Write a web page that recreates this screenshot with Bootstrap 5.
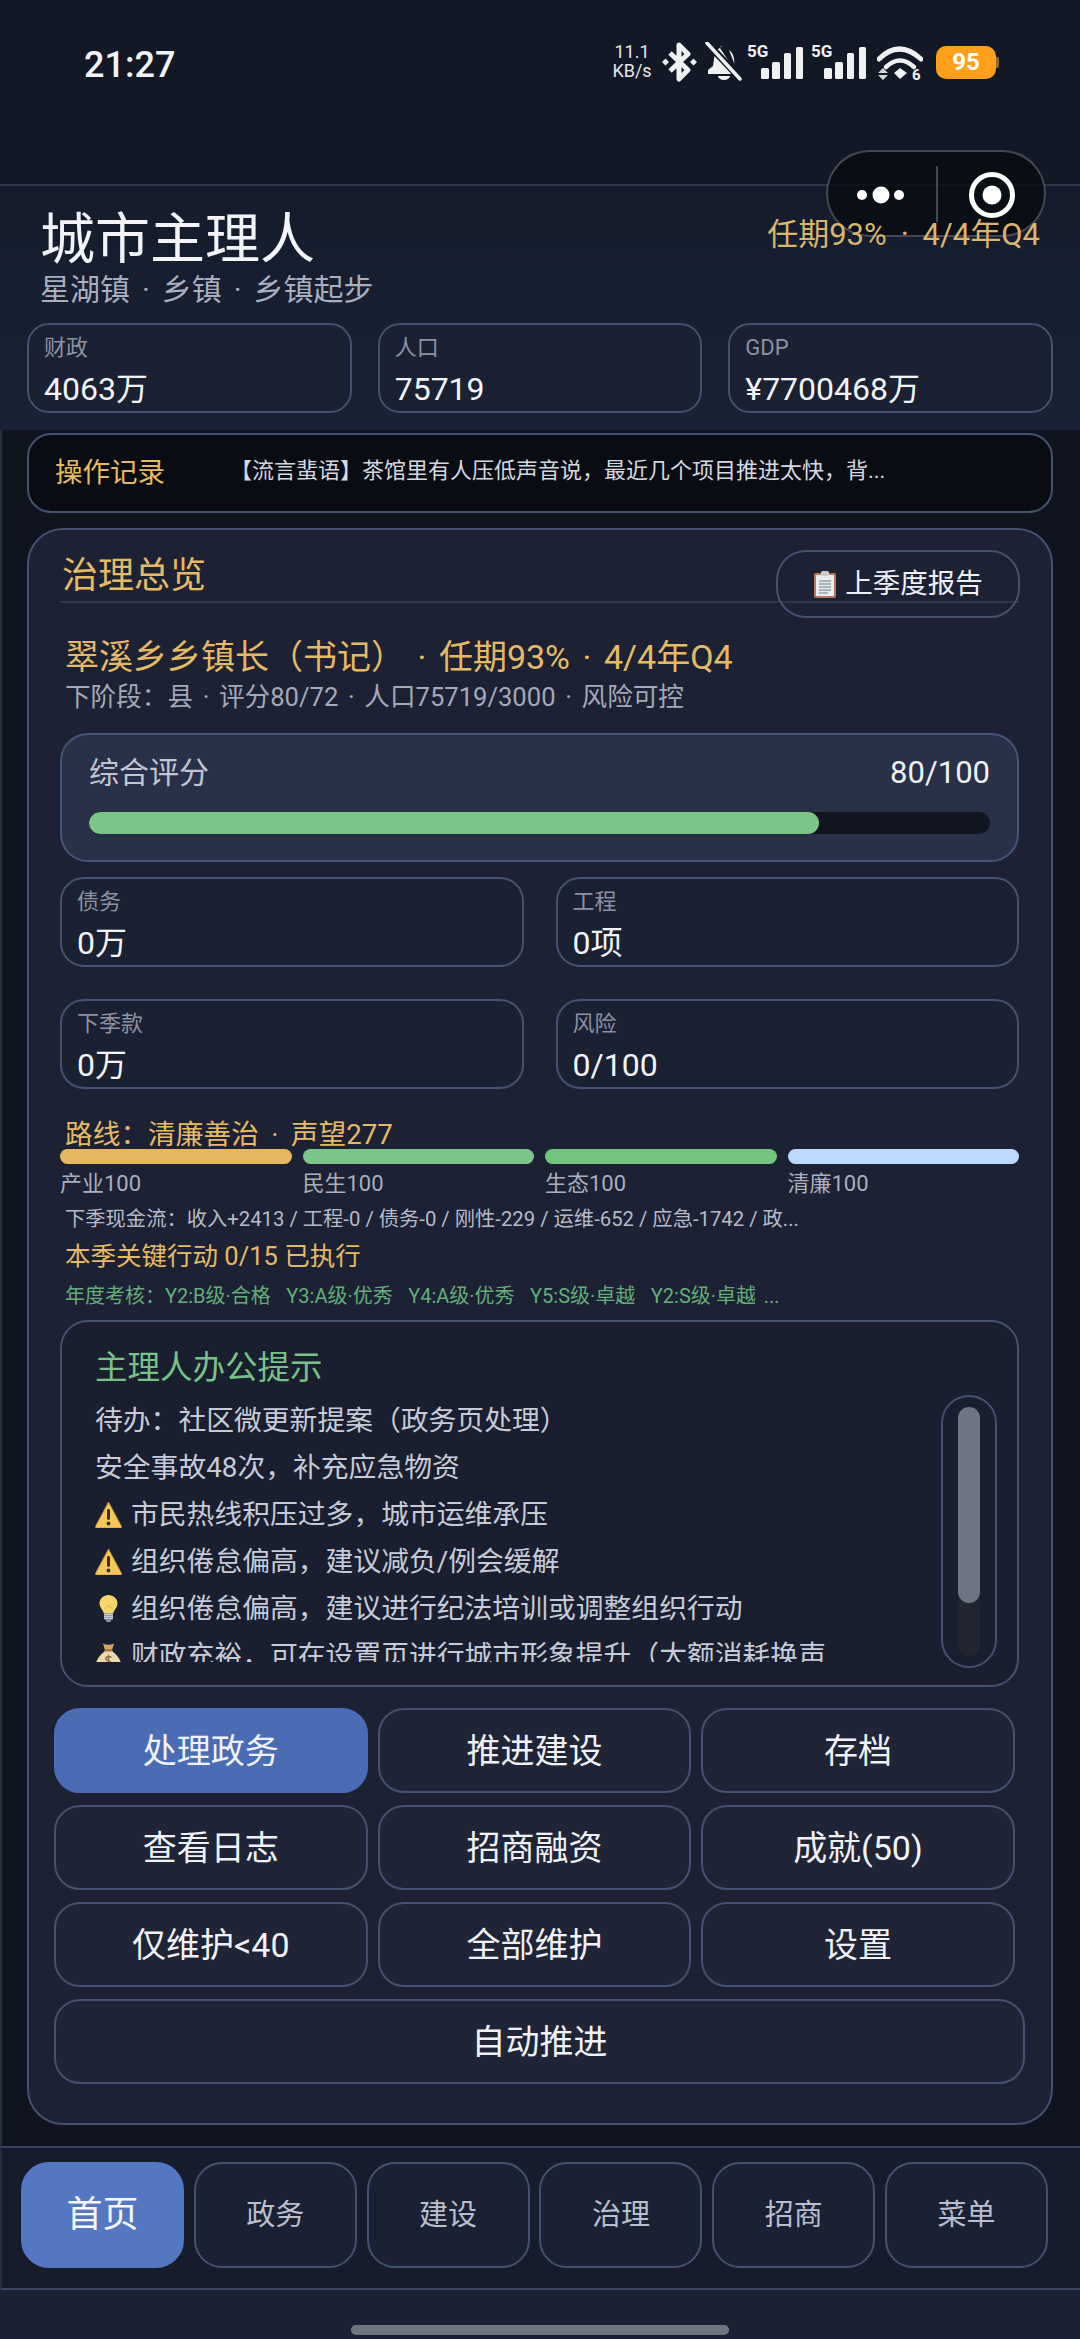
<!DOCTYPE html>
<html lang="zh">
<head>
<meta charset="utf-8">
<title>城市主理人</title>
<link href="https://cdn.jsdelivr.net/npm/bootstrap@5.3.0/dist/css/bootstrap.min.css" rel="stylesheet">
<style>
html,body{margin:0;background:#1a2133;}
body{width:1080px;height:2339px;overflow:hidden;position:relative;font-family:Roboto,"Noto Sans CJK SC",sans-serif;color:#eef1f8;}
.gold{color:#e6ba64;}
.midot{margin:0 .2em;}
.appsub .midot{margin:0 .15em;}
.mayor .midot{margin:0 .12em;}
.nextst .midot{margin:0 .13em;}
.statusbar{height:184px;background:#121825;padding:0 84px 0 84px;align-items:flex-start;}
.clock{font-size:36px;font-weight:500;line-height:40px;margin-top:45px;color:#f2f3f6;}
.speed{font-size:18px;line-height:19px;text-align:center;color:#e6e7ea;width:44px;margin-top:42px;margin-right:8px;white-space:nowrap;}
.sticons{margin-top:42px;}
.batt{width:60px;height:33px;margin-left:13px;margin-top:46px;background:#ff9f1a;border-radius:10px;color:#fff;font-weight:700;font-size:24px;line-height:33px;text-align:center;position:relative;}
.batt::after{content:"";position:absolute;right:-3px;top:11px;width:3px;height:11px;background:#8a6a30;border-radius:0 2px 2px 0;}
.capsule{position:absolute;left:826px;top:150px;width:220px;height:87px;border-radius:44px;border:2px solid rgba(125,130,145,.5);background:rgba(8,10,16,.78);z-index:5;}
.capdiv{position:absolute;left:108px;top:14px;width:2px;height:56px;background:rgba(140,145,160,.45);}
.apphead{border-top:2px solid #2c3549;background:linear-gradient(180deg,#141c2c,#192234);padding:22px 27px 17px;height:246px;}
.apptitle{font-size:55px;line-height:62px;padding-left:13px;color:#f2f4fa;}
.appsub{font-size:30px;line-height:40px;padding-left:13px;color:#a9afbd;}
.termtxt{font-size:31px;line-height:40px;margin-top:7px;padding-right:13px;color:#d9b56d;position:relative;z-index:6;}
.statrow{--bs-gutter-x:26px;--bs-gutter-y:0;margin-top:13px;}
.statbox{height:90px;border:2px solid #44516f;border-radius:22px;background:#1a2132;padding:11px 15px 0;}
.statlab{font-size:22px;line-height:24px;color:#8c92a1;}
.statval{font-size:32px;line-height:44px;margin-top:7px;color:#f2f4fa;white-space:nowrap;}
.dashbody{height:1716px;background:#10141f;border-left:2px solid #252d40;border-right:0;padding:3px 27px 0 25px;}
.logbox{height:80px;background:#090c13;border:2px solid #44516f;border-radius:24px;padding:0 0 0 26px;}
.loglab{font-size:27.5px;width:175px;}
.logtxt{font-size:22px;color:#d5d8e0;margin-top:-6px;white-space:nowrap;}
.maincard{height:1597px;margin-top:15px;background:#1c2233;border:2px solid #44516f;border-radius:36px;padding:20px 32px 0 31px;color:#eef1f8;}
.ovhead{height:53px;border-bottom:2px solid #2f384e;padding-left:2px;}
.ovtitle{font-size:36px;line-height:53px;}
.reportbtn{width:244px;height:68px;margin:0 -1px -16px 0;border:2px solid #44516f;border-radius:30px;background:transparent;color:#eef1f8;font-size:27.5px;padding:0;line-height:1;}
.reportbtn:hover{color:#eef1f8;border-color:#44516f;}
.mayor{font-size:34px;line-height:44px;margin-top:32px;padding-left:5px;white-space:nowrap;}
.nextst{font-size:25.6px;line-height:36px;padding-left:5px;color:#a3a9b8;}
.scorebox{height:129px;margin-top:18px;background:#283147;border:2px solid #46547a;border-radius:28px;padding:18px 27px 0;}
.scorelab{font-size:30px;line-height:40px;color:#c0c5d1;}
.scoreval{font-size:31px;line-height:40px;color:#eef1f8;}
.scoretrack{height:22px;margin-top:19px;background:#111621;border-radius:11px;}
.scoretrack .progress-bar{background:#7cc589;border-radius:11px;}
.minirow{--bs-gutter-x:32px;--bs-gutter-y:32px;margin-top:-17px;}
.minibox{height:90px;border:2px solid #44516f;border-radius:24px;background:#1a2132;padding:11px 15px 0;}
.routeline{font-size:27.7px;line-height:28px;margin-top:32px;padding-left:5px;white-space:nowrap;}
.tracks{column-gap:11px;}
.tracks>div{flex:1 1 0;}
.trackbar{height:15px;border-radius:8px;}
.tracklab{font-size:22px;line-height:26px;margin-top:7px;color:#a9afbd;}
.cashline{font-size:20.3px;line-height:24px;margin-top:10px;padding-left:5px;color:#b6bbc8;white-space:nowrap;}
.keyline{font-size:25.5px;line-height:32px;margin-top:9px;padding-left:5px;}
.annual{font-size:20px;line-height:24px;margin-top:12px;padding-left:5px;color:#64ad7a;white-space:pre;word-spacing:2.8px;}
.tipsbox{height:367px;margin-top:12px;background:#191f2e;border:2px solid #44516f;border-radius:28px;padding:21px 20px 0 33px;}
.tipstitle{font-size:32.5px;line-height:50px;color:#78c189;}
.tipsflex{align-items:flex-start;}
.tiplist{height:265px;overflow:hidden;margin-top:4px;}
.tipline{font-size:27.8px;line-height:47px;color:#c6cbd8;white-space:nowrap;display:flex;align-items:center;height:47px;}
.tipline svg{flex:none;margin-right:9px;}
.sbtrack{width:56px;height:273px;margin-top:2px;border:2px solid #44516f;border-radius:28px;padding:10px 15px 0;}
.sbinner{width:22px;height:249px;background:#212631;border-radius:11px;}
.sbthumb{width:22px;height:196px;background:#6f7483;border-radius:11px;}
.actgrid{width:971px;margin:21px 0 0 -6px;row-gap:12px;column-gap:10px;}
.actbtn{width:313.6px;height:85px;padding:0;background:#1f2537;border:2px solid #44516f;border-radius:26px;color:#f0f2f8;font-size:34px;line-height:1;}
.actbtn:hover{background:#1f2537;border-color:#44516f;color:#f0f2f8;}
.actbtn.actwide{width:971px;}
.actbtn.acton,.actbtn.acton:hover{background:#4a6cb5;border-color:#4a6cb5;}
.tabbar{height:144px;background:#171c2c;border-top:2px solid #39445f;border-bottom:2px solid #39445f;border-left:2px solid #252d40;padding:14px 0 0 19px;column-gap:9.8px;}
.tabbtn{width:163px;height:106px;padding:0;background:#1a2132;border:2px solid #44516f;border-radius:28px;color:#b9bfcd;font-size:29px;line-height:1;}
.tabbtn:hover{background:#1a2132;border-color:#44516f;color:#b9bfcd;}
.tabbtn.tabon,.tabbtn.tabon:hover{background:#5377c0;border-color:#5377c0;color:#f5f7fc;font-size:36px;}
.homebar{width:378px;height:10px;margin:35px auto 0;background:#71757f;border-radius:5px;}
</style>
</head>
<body>
<svg width="0" height="0" class="position-absolute">
  <defs>
    <symbol id="warn" viewBox="0 0 27 27">
      <path d="M13.5 1 L26.6 25.5 Q27 27 25.5 27 L1.5 27 Q0 27 .4 25.5 Z" fill="#f5c658"/>
      <path d="M13.5 1 L26.6 25.5 Q27 27 25.5 27 L1.5 27 Q0 27 .4 25.5 Z" fill="none" stroke="#b98d3a" stroke-width=".8"/>
      <rect x="12" y="8" width="3" height="11" rx="1.4" fill="#3b3020"/>
      <circle cx="13.5" cy="22.5" r="1.9" fill="#3b3020"/>
    </symbol>
    <symbol id="bulb" viewBox="0 0 18 27">
      <path d="M9 0C4 0 0 3.600 0 8.400c0 3.800 3.200 6 4.400 10h9.200c1.200-4 4.400-6.200 4.400-10C18 3.600 14 0 9 0Z" fill="#f7d56b"/>
      <path d="M5 14Q9 8 13 14" fill="none" stroke="#e5ae3e" stroke-width="1"/>
      <rect x="4.500" y="18.500" width="9" height="6" rx="1" fill="#c9ccd4"/>
      <path d="M4.500 20.500h9M4.500 22.500h9" stroke="#8d919c" stroke-width=".8"/>
      <rect x="6.500" y="24.500" width="5" height="2.500" rx="1" fill="#8d919c"/>
    </symbol>
    <symbol id="bag" viewBox="0 0 27 27">
      <path d="M8 1.500 Q13.500 4 19 1.500 L17 8 L10 8 Z" fill="#d9a765"/>
      <path d="M10 9 Q1 16 .6 23.500 Q.5 27 4 27 L23 27 Q26.500 27 26.400 23.500 Q26 16 17 9 Z" fill="#ecd9ae"/>
      <rect x="9.500" y="7" width="8" height="2.400" rx="1" fill="#a8763e"/>
      <path d="M16.500 15.500Q13.500 13.500 11 15.500Q10 18 13.500 19Q17 20 16 22.500Q13.500 24.500 10.500 22.500M13.500 12.800V25" fill="none" stroke="#8e7146" stroke-width="1.500"/>
    </symbol>
  </defs>
</svg>

<div class="capsule">
  <svg class="position-absolute" style="left:22px;top:28px" width="62" height="30" viewBox="0 0 62 30"><circle cx="12" cy="15" r="5" fill="#fff"/><circle cx="31" cy="15" r="8.500" fill="#fff"/><circle cx="49" cy="15" r="5" fill="#fff"/></svg>
  <div class="capdiv"></div>
  <svg class="position-absolute" style="left:135px;top:14px" width="58" height="58" viewBox="0 0 58 58"><circle cx="29" cy="29" r="20.500" fill="none" stroke="#fff" stroke-width="5"/><circle cx="29" cy="29" r="9.500" fill="#fff"/></svg>
</div>

<div class="statusbar d-flex">
  <div class="clock">21:27</div>
  <div class="ms-auto d-flex align-items-start">
    <div class="speed">11.1<br>KB/s</div>
    <svg class="sticons" width="36" height="40" viewBox="0 0 36 40"><path d="M8 11 L26 28 L17 37 L17 3 L26 12 L8 29" fill="none" stroke="#f0f1f3" stroke-width="5" stroke-linejoin="round"/><path d="M0 20l3.500-3.500 3.500 3.500-3.500 3.500ZM28 20l3.500-3.500 3.500 3.500-3.500 3.500Z" fill="#f0f1f3"/></svg>
    <svg class="sticons" style="margin-left:7px" width="38" height="40" viewBox="0 0 38 40"><path d="M17 4c-1 0-1.800.8-2 2-3 1-5 4-5.500 8l-1.500 10-5 4v4h29l-17-26c.6-1 1.500-1.500 2.500-2Z" fill="#f0f1f3"/><path d="M24 8c3 2 4.500 5 5 9l.5 5Z" fill="#f0f1f3"/><path d="M13 34a6 4 0 0 0 12 0Z" fill="#f0f1f3"/><path d="M3 2 L35 36" stroke="#121825" stroke-width="7"/><path d="M2 1 L35 37" stroke="#f0f1f3" stroke-width="3.500" stroke-linecap="round"/></svg>
    <svg class="sticons" style="margin-left:4px" width="56" height="40" viewBox="0 0 56 40"><text x="0" y="15" font-family="Roboto,sans-serif" font-size="17" font-weight="700" fill="#f0f1f3">5G</text><rect x="14" y="26" width="8" height="11" rx="1.500" fill="#f0f1f3"/><rect x="25" y="20" width="8" height="17" rx="1.500" fill="#f0f1f3"/><rect x="37" y="11" width="7" height="26" rx="1.500" fill="#f0f1f3"/><rect x="49" y="5" width="7" height="32" rx="1.500" fill="#f0f1f3"/></svg>
    <svg class="sticons" style="margin-left:8px" width="56" height="40" viewBox="0 0 56 40"><text x="0" y="15" font-family="Roboto,sans-serif" font-size="17" font-weight="700" fill="#f0f1f3">5G</text><rect x="13" y="26" width="8" height="11" rx="1.500" fill="#f0f1f3"/><rect x="24" y="20" width="8" height="17" rx="1.500" fill="#f0f1f3"/><rect x="36" y="11" width="7" height="26" rx="1.500" fill="#f0f1f3"/><rect x="48" y="5" width="7" height="32" rx="1.500" fill="#f0f1f3"/></svg>
    <svg class="sticons" style="margin-left:10px" width="46" height="46" viewBox="0 0 46 46"><path d="M2 17Q22-3 44 17" fill="none" stroke="#f0f1f3" stroke-width="5" stroke-linecap="round"/><path d="M9 25Q23 12 37 25" fill="none" stroke="#f0f1f3" stroke-width="4.500" stroke-linecap="round"/><path d="M17 31L23 26L30 31L23 37Z" fill="#f0f1f3"/><path d="M1 31l5-5 5 5ZM1 33l5 5 5-5Z" fill="#d5d6da"/><text x="35" y="38" font-family="Roboto,sans-serif" font-size="15" font-weight="700" fill="#f0f1f3">6</text></svg>
    <div class="batt">95</div>
  </div>
</div>

<header class="apphead">
  <div class="d-flex justify-content-between align-items-start">
    <div>
      <div class="apptitle">城市主理人</div>
      <div class="appsub">星湖镇<span class="midot"> · </span>乡镇<span class="midot"> · </span>乡镇起步</div>
    </div>
    <div class="termtxt">任期93%<span class="midot"> · </span>4/4年Q4</div>
  </div>
  <div class="row statrow">
    <div class="col-4"><div class="statbox"><div class="statlab">财政</div><div class="statval">4063万</div></div></div>
    <div class="col-4"><div class="statbox"><div class="statlab">人口</div><div class="statval">75719</div></div></div>
    <div class="col-4"><div class="statbox"><div class="statlab">GDP</div><div class="statval">¥7700468万</div></div></div>
  </div>
</header>

<main class="dashbody">
  <div class="logbox d-flex align-items-center">
    <div class="loglab gold">操作记录</div>
    <div class="logtxt">【流言蜚语】茶馆里有人压低声音说，最近几个项目推进太快，背...</div>
  </div>

  <section class="card maincard">
    <div class="ovhead d-flex justify-content-between align-items-start">
      <div class="ovtitle gold">治理总览</div>
      <button class="btn reportbtn d-flex align-items-center justify-content-center" type="button">
        <svg class="me-2" width="24" height="28" viewBox="0 0 24 28"><rect x="1" y="3" width="22" height="25" rx="2" fill="#b9765c"/><rect x="3" y="5" width="18" height="21" fill="#e9edf0"/><rect x="8" y="1" width="8" height="5" rx="1.500" fill="#c9cdd2"/><path d="M6 11h12M6 14h12M6 17h12M6 20h12M6 23h9" stroke="#8fa5ac" stroke-width="1.300"/></svg>上季度报告
      </button>
    </div>
    <div class="mayor gold">翠溪乡乡镇长（书记）<span class="midot"> · </span>任期93%<span class="midot"> · </span>4/4年Q4</div>
    <div class="nextst">下阶段：县<span class="midot"> · </span>评分80/72<span class="midot"> · </span>人口75719/3000<span class="midot"> · </span>风险可控</div>

    <div class="scorebox">
      <div class="d-flex justify-content-between">
        <div class="scorelab">综合评分</div>
        <div class="scoreval">80/100</div>
      </div>
      <div class="progress scoretrack"><div class="progress-bar" style="width:81%"></div></div>
    </div>

    <div class="row minirow">
      <div class="col-6"><div class="minibox"><div class="statlab">债务</div><div class="statval">0万</div></div></div>
      <div class="col-6"><div class="minibox"><div class="statlab">工程</div><div class="statval">0项</div></div></div>
      <div class="col-6"><div class="minibox"><div class="statlab">下季款</div><div class="statval">0万</div></div></div>
      <div class="col-6"><div class="minibox"><div class="statlab">风险</div><div class="statval">0/100</div></div></div>
    </div>

    <div class="routeline gold">路线：清廉善治<span class="midot"> · </span>声望277</div>
    <div class="d-flex tracks">
      <div><div class="trackbar" style="background:#e5b860"></div><div class="tracklab">产业100</div></div>
      <div><div class="trackbar" style="background:#7cc589"></div><div class="tracklab">民生100</div></div>
      <div><div class="trackbar" style="background:#72c47f"></div><div class="tracklab">生态100</div></div>
      <div><div class="trackbar" style="background:#bcdafe"></div><div class="tracklab">清廉100</div></div>
    </div>
    <div class="cashline">下季现金流：收入+2413 / 工程-0 / 债务-0 / 刚性-229 / 运维-652 / 应急-1742 / 政...</div>
    <div class="keyline gold">本季关键行动 0/15 已执行</div>
    <div class="annual">年度考核：Y2:B级·合格  Y3:A级·优秀  Y4:A级·优秀  Y5:S级·卓越  Y2:S级·卓越 ...</div>

    <div class="tipsbox">
      <div class="tipstitle">主理人办公提示</div>
      <div class="d-flex justify-content-between tipsflex">
        <div class="tiplist">
          <div class="tipline">待办：社区微更新提案（政务页处理）</div>
          <div class="tipline">安全事故48次，补充应急物资</div>
          <div class="tipline"><svg width="27" height="27"><use href="#warn"/></svg>市民热线积压过多，城市运维承压</div>
          <div class="tipline"><svg width="27" height="27"><use href="#warn"/></svg>组织倦怠偏高，建议减负/例会缓解</div>
          <div class="tipline"><svg width="27" height="27"><use href="#bulb"/></svg>组织倦怠偏高，建议进行纪法培训或调整组织行动</div>
          <div class="tipline"><svg width="27" height="27"><use href="#bag"/></svg>财政充裕，可在设置页进行城市形象提升（大额消耗换声</div>
        </div>
        <div class="sbtrack"><div class="sbinner"><div class="sbthumb"></div></div></div>
      </div>
    </div>

    <div class="d-flex flex-wrap actgrid">
      <button class="btn actbtn acton" type="button">处理政务</button>
      <button class="btn actbtn" type="button">推进建设</button>
      <button class="btn actbtn" type="button">存档</button>
      <button class="btn actbtn" type="button">查看日志</button>
      <button class="btn actbtn" type="button">招商融资</button>
      <button class="btn actbtn" type="button">成就(50)</button>
      <button class="btn actbtn" type="button">仅维护&lt;40</button>
      <button class="btn actbtn" type="button">全部维护</button>
      <button class="btn actbtn" type="button">设置</button>
      <button class="btn actbtn actwide" type="button">自动推进</button>
    </div>
  </section>
</main>

<nav class="tabbar d-flex">
  <button class="btn tabbtn tabon" type="button">首页</button>
  <button class="btn tabbtn" type="button">政务</button>
  <button class="btn tabbtn" type="button">建设</button>
  <button class="btn tabbtn" type="button">治理</button>
  <button class="btn tabbtn" type="button">招商</button>
  <button class="btn tabbtn" type="button">菜单</button>
</nav>
<div class="homebar"></div>
<script src="https://cdn.jsdelivr.net/npm/bootstrap@5.3.0/dist/js/bootstrap.bundle.min.js"></script>
</body>
</html>
